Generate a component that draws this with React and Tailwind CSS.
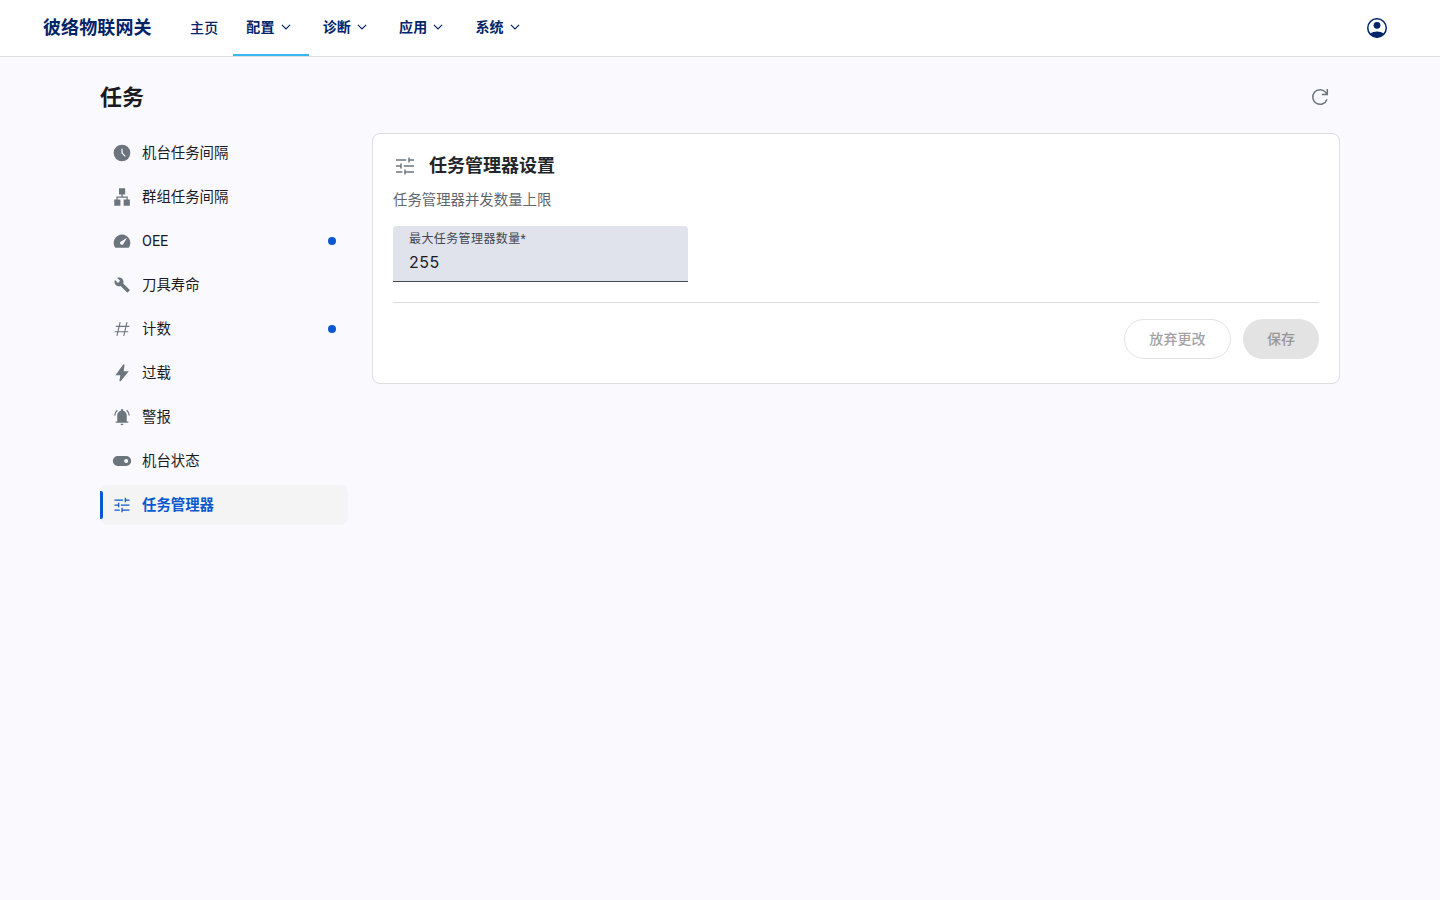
import { useState } from 'react';
import clsx from 'clsx';

const navItems = [
  { label: '主页' },
  { label: '配置', menu: true, active: true },
  { label: '诊断', menu: true },
  { label: '应用', menu: true },
  { label: '系统', menu: true },
];

const tasks = [
  { id: 'interval', label: '机台任务间隔', icon: ClockIcon },
  { id: 'group', label: '群组任务间隔', icon: TreeIcon },
  { id: 'oee', label: 'OEE', icon: GaugeIcon, dot: true },
  { id: 'tool', label: '刀具寿命', icon: WrenchIcon },
  { id: 'count', label: '计数', icon: HashIcon, dot: true },
  { id: 'overload', label: '过载', icon: BoltIcon },
  { id: 'alarm', label: '警报', icon: BellIcon },
  { id: 'status', label: '机台状态', icon: ToggleIcon },
  { id: 'manager', label: '任务管理器', icon: TuneIcon },
];

function Svg({ className = 'size-5', children }) {
  return (
    <svg viewBox="0 0 24 24" fill="currentColor" className={clsx('shrink-0', className)}>
      {children}
    </svg>
  );
}

function ClockIcon() {
  return (
    <Svg>
      <path
        fillRule="evenodd"
        d="M12 2a10 10 0 1 0 0 20 10 10 0 0 0 0-20zM11.25 7h1.5v4.7l3.8 3.8-1.05 1.05-4.25-4.25z"
      />
    </Svg>
  );
}

function TreeIcon() {
  return (
    <Svg>
      <path d="M8.4 1.6h7.4v7.4h-2.9v2.3h6v3.7h2.5v7.4H14V15h3.4v-2.2H6.8V15h3.3v7.4H2.7V15h2.6v-3.7h6V9H8.4z" />
    </Svg>
  );
}

function GaugeIcon() {
  return (
    <Svg>
      <path
        fillRule="evenodd"
        d="M5.1 20.2c-.8 0-1.4-.3-1.8-1A10 10 0 1 1 20.7 19.2c-.4.7-1 1-1.8 1zM10.3 15.9c1 .9 2.5.9 3.2-.1l4.5-7.8-7.6 4.8c-1 .8-1.1 2.2-.1 3.1z"
      />
    </Svg>
  );
}

function WrenchIcon() {
  return (
    <Svg>
      <path
        transform="translate(2.2 2) scale(.83)"
        d="M22.7 19l-9.1-9.1c.9-2.3.4-5-1.5-6.9-2-2-5-2.4-7.4-1.3L9 6 6 9 1.6 4.7C.4 7.1.9 10.1 2.9 12.1c1.9 1.9 4.6 2.4 6.9 1.5l9.1 9.1c.4.4 1 .4 1.4 0l2.3-2.3c.5-.4.5-1.1.1-1.4z"
      />
    </Svg>
  );
}

function HashIcon() {
  return (
    <Svg>
      <path d="M9.8 3.8 5.9 20.2M18 3.8l-3.9 16.4M4.6 8.8h16.2M3.2 15.2h16.2" fill="none" stroke="currentColor" strokeWidth="1.3" />
    </Svg>
  );
}

function BoltIcon() {
  return (
    <Svg>
      <path d="M8.9 21.9 10 14.6H4.1L13.4 1.8h1.7l-1.1 8.1h6.1L10.4 21.9z" />
    </Svg>
  );
}

function BellIcon() {
  return (
    <Svg>
      <path d="M4.4 18.9v-1.5h1.9V10c0-2.7 1.8-5 4.4-5.6v-.6c0-.8.6-1.4 1.3-1.4s1.3.6 1.3 1.4v.6c2.6.6 4.4 2.9 4.4 5.6v7.4h1.9v1.5zM12 21.8c-1 0-1.8-.7-1.8-1.6h3.6c0 .9-.8 1.6-1.8 1.6z" />
      <path d="M3.3 10.2c.1-2.6 1.2-4.8 3.1-6.4M20.7 10.2c-.1-2.6-1.2-4.8-3.1-6.4" fill="none" stroke="currentColor" strokeWidth="1.5" />
    </Svg>
  );
}

function ToggleIcon() {
  return (
    <Svg>
      <path
        fillRule="evenodd"
        d="M7 6h10a6 6 0 0 1 0 12H7A6 6 0 0 1 7 6zM17 9.6a2.4 2.4 0 1 0 0 4.8 2.4 2.4 0 0 0 0-4.8z"
      />
    </Svg>
  );
}

function TuneIcon({ className }) {
  return (
    <Svg className={className}>
      <path
        d="M3 6h10.3M16 3.4v5.2M16 6h5M3 12h5M8 9.4v5.2M10.7 12H21M3 18h6.3M12 15.4v5.2M12 18h9"
        fill="none"
        stroke="currentColor"
        strokeWidth="1.5"
      />
    </Svg>
  );
}

function RefreshIcon() {
  return (
    <Svg className="size-6">
      <path d="M19 14.2A7.3 7.3 0 1 1 17.7 7.4L19.2 9.2M19.3 4v5.5h-5.5" fill="none" stroke="currentColor" strokeWidth="1.5" />
    </Svg>
  );
}

function AccountIcon() {
  return (
    <Svg className="size-6">
      <circle cx="12" cy="12" r="9.25" fill="none" stroke="currentColor" strokeWidth="1.5" />
      <circle cx="12" cy="9.3" r="3.4" />
      <path d="M5.1 17.6c2-1.3 4.3-2 6.9-2s4.9.7 6.9 2A9.2 9.2 0 0 1 12 21.5a9.2 9.2 0 0 1-6.9-3.9z" />
    </Svg>
  );
}

function Chevron() {
  return (
    <svg viewBox="0 0 10 6" className="h-1.5 w-2.5" fill="none" stroke="currentColor" strokeWidth="1.15">
      <path d="M.9.8 5 4.9 9.1.8" />
    </svg>
  );
}

function Header() {
  return (
    <header className="flex h-[57px] items-center border-b border-[#dedede] bg-white pl-[43px] pr-[51px] text-[#002468]">
      <h1 className="mr-[25px] pb-0.5 text-[18px] font-bold tracking-[0.1px]">彼络物联网关</h1>
      <nav className="flex h-full text-sm tracking-[0.1px]">
        {navItems.map((item) => (
          <button
            key={item.label}
            className={clsx(
              'flex h-full items-center gap-1.5 border-b-2 pl-[13.5px]',
              item.menu ? 'w-[76.4px] font-bold' : 'pt-0.5 pr-[14.5px] font-medium',
              item.active ? 'border-[#38b6f1]' : 'border-transparent'
            )}
          >
            {item.label}
            {item.menu && <Chevron />}
          </button>
        ))}
      </nav>
      <button className="ml-auto">
        <AccountIcon />
      </button>
    </header>
  );
}

function Sidebar({ current, onSelect }) {
  return (
    <aside className="flex w-[248px] flex-col gap-1">
      {tasks.map((task) => {
        const active = task.id === current;
        const Icon = task.icon;
        return (
          <button
            key={task.id}
            onClick={() => onSelect(task.id)}
            className={clsx(
              'relative flex h-10 items-center gap-2.5 rounded-lg px-3 text-[14.4px]',
              active ? 'bg-[#f4f4f4] font-bold text-[#0b57d0]' : 'text-[#1a1b1f]'
            )}
          >
            {active && <span className="absolute inset-y-1.5 left-0 w-[3px] rounded-r-xs bg-[#0b57d0]" />}
            <span className={active ? 'text-[#0b57d0]' : 'text-[#6c757d]'}>
              <Icon />
            </span>
            <span className="pt-0.5">{task.label}</span>
            {task.dot && <span className="ml-auto size-2 rounded-full bg-[#0b57d0]" />}
          </button>
        );
      })}
    </aside>
  );
}

function ManagerCard() {
  const [limit, setLimit] = useState('255');

  return (
    <section className="h-[251px] flex-1 rounded-lg border border-[#dedede] bg-white px-5 pt-5">
      <div className="flex h-6 items-center gap-3">
        <span className="text-[#6c757d]">
          <TuneIcon className="size-6" />
        </span>
        <h3 className="pb-0.5 text-[18px] font-bold text-[#212529]">任务管理器设置</h3>
      </div>
      <p className="mt-2.5 h-6 pt-px text-[14.4px] leading-6 text-[#5f676e]">任务管理器并发数量上限</p>

      <label className="mt-3.5 flex h-14 w-[295px] flex-col rounded-t border-b border-[#44474e] bg-[#e0e2ec] px-4 pt-[5px]">
        <span className="text-xs leading-[17px] tracking-[0.4px] text-[#44474e]">最大任务管理器数量*</span>
        <input
          value={limit}
          onChange={(e) => setLimit(e.target.value)}
          className="mt-0.5 h-6 w-full bg-transparent font-['Inter',sans-serif] text-base tracking-[0.5px] text-[#1a1b1f] outline-none"
        />
      </label>

      {/* Actions */}
      <div className="mt-5 flex justify-end gap-3 border-t border-[#dedede] pt-4 text-sm font-medium tracking-[0.1px]">
        <button disabled className="h-10 w-[107px] rounded-full border border-[#e3e3e3] text-[#a3a3a5]">
          放弃更改
        </button>
        <button disabled className="h-10 w-[76px] rounded-full bg-[#e3e3e3] text-[#979799]">
          保存
        </button>
      </div>
    </section>
  );
}

export default function App() {
  const [current, setCurrent] = useState('manager');

  return (
    <div className="min-h-screen bg-[#faf9fe] font-['Roboto','Noto_Sans_CJK_SC',sans-serif]">
      <Header />
      <main className="mx-auto w-[1240px]">
        <div className="flex h-[76px] items-center justify-between pt-1 pr-2">
          <h2 className="text-[22px] font-bold text-[#1a1b1f]">任务</h2>
          <button className="text-[#6c757d]">
            <RefreshIcon />
          </button>
        </div>
        <div className="flex items-start gap-6">
          <Sidebar current={current} onSelect={setCurrent} />
          <ManagerCard />
        </div>
      </main>
    </div>
  );
}
